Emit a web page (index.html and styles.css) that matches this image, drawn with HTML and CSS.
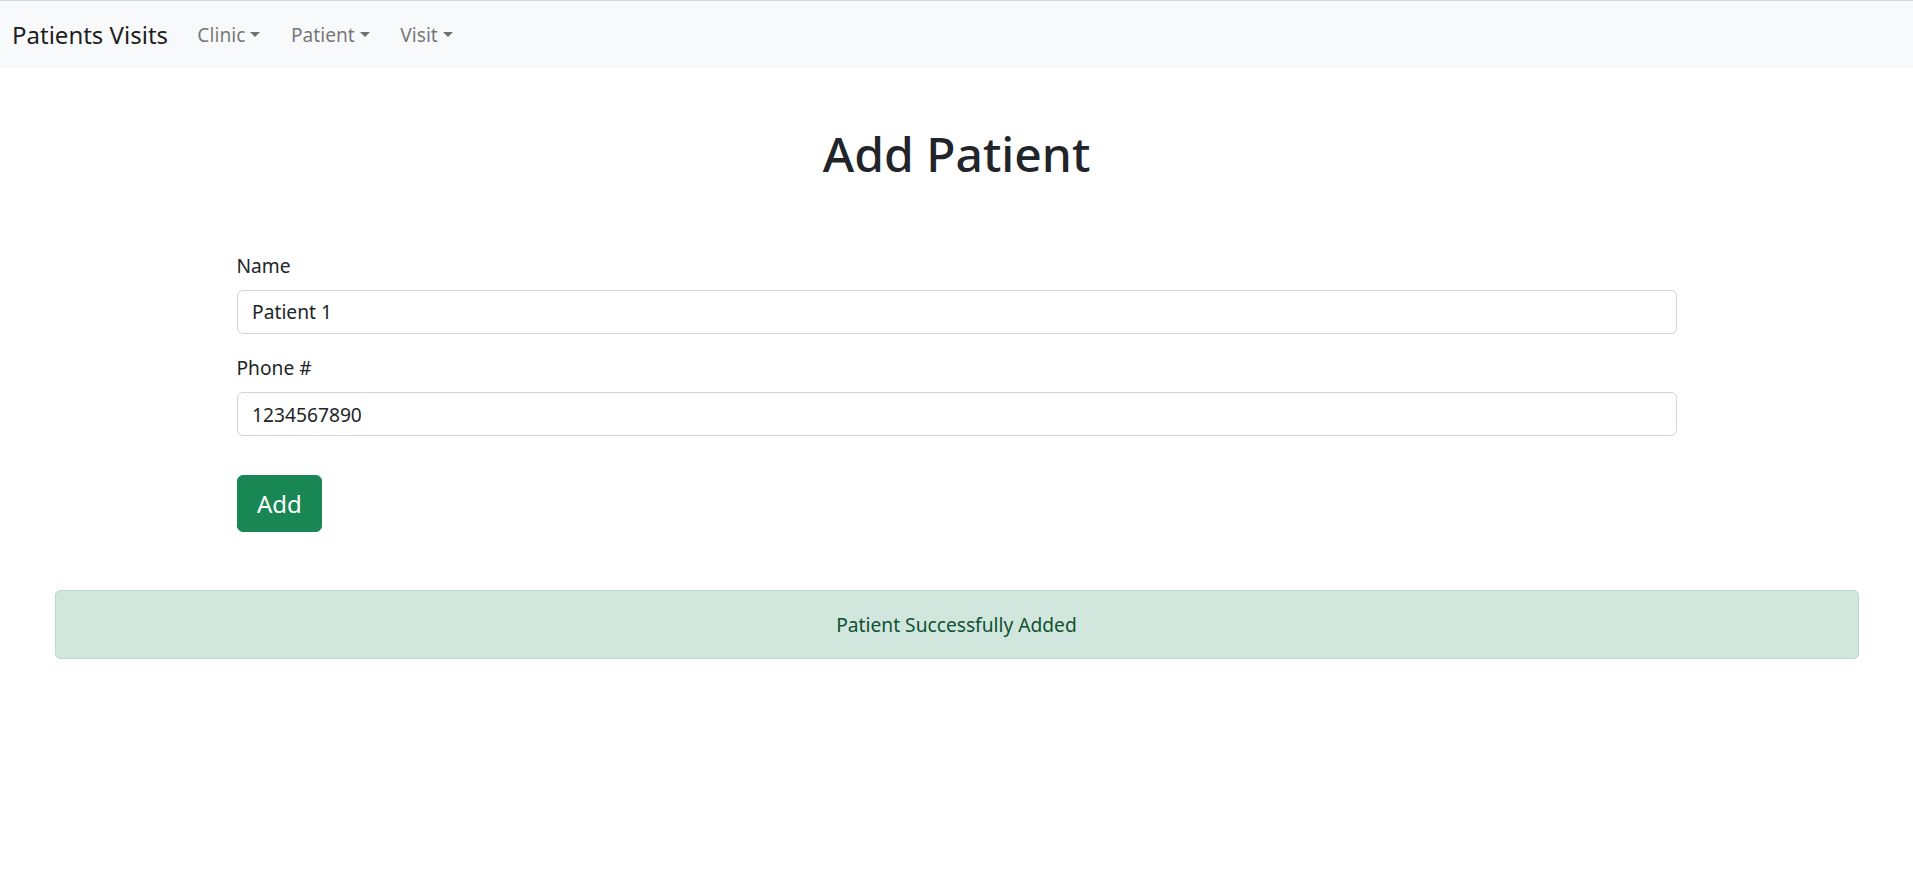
FILE: index.html
```html
<!DOCTYPE html>
<html lang="en">
<head>
<meta charset="utf-8">
<title>Patients Visits</title>
<link rel="stylesheet" href="styles.css">
</head>
<body>
<nav class="navbar">
  <a class="brand" href="#">Patients Visits</a>
  <ul class="nav">
    <li><a class="nav-link dropdown-toggle" href="#">Clinic</a></li>
    <li><a class="nav-link dropdown-toggle" href="#">Patient</a></li>
    <li><a class="nav-link dropdown-toggle" href="#">Visit</a></li>
  </ul>
</nav>
<main class="main">
  <h1 class="title">Add Patient</h1>
  <form class="form">
    <div class="field">
      <label class="label" for="name">Name</label>
      <input class="input" id="name" type="text" value="Patient 1">
    </div>
    <div class="field">
      <label class="label" for="phone">Phone #</label>
      <input class="input" id="phone" type="text" value="1234567890">
    </div>
    <button class="btn" type="button">Add</button>
  </form>
  <div class="alert">Patient Successfully Added</div>
</main>
</body>
</html>
```
FILE: styles.css
```css
* { box-sizing: border-box; }
html, body { margin: 0; padding: 0; }
body {
  font-family: "Noto Sans", "Open Sans", "Liberation Sans", sans-serif;
  font-size: 19.2px;
  line-height: 1.5;
  color: #212529;
  background: #fff;
}
.navbar {
  display: flex;
  align-items: center;
  height: 68px;
  padding: 0 12px;
  background: #f8f9fa;
  border-top: 1px solid #d4d5d6;
}
.brand {
  font-size: 24px;
  line-height: 36px;
  color: rgba(0,0,0,.9);
  text-decoration: none;
  margin-right: 14px;
}
.nav {
  display: flex;
  list-style: none;
  margin: 0;
  padding: 0;
}
.nav-link {
  display: block;
  padding: 0 15.3px;
  color: rgba(0,0,0,.55);
  text-decoration: none;
  line-height: 29px;
}
.dropdown-toggle::after {
  display: inline-block;
  margin-left: .255em;
  vertical-align: .255em;
  content: "";
  border-top: .3em solid;
  border-right: .3em solid transparent;
  border-left: .3em solid transparent;
  border-bottom: 0;
}
.main {
  padding-top: 56.6px;
}
.title {
  margin: 0;
  font-size: 48px;
  font-weight: 500;
  line-height: 1.2;
  text-align: center;
}
.form {
  width: 1440px;
  margin: 68.6px auto 0;
}
.field { margin-bottom: 19.5px; }
.label {
  display: block;
  margin-bottom: 9.8px;
  line-height: 29.3px;
}
.input {
  display: block;
  width: 100%;
  height: 44px;
  padding: 0 14.6px;
  font: inherit;
  color: #212529;
  border: 1px solid #d0d4d9;
  border-radius: 6px;
  background: #fff;
}
.btn {
  display: inline-block;
  margin-top: 19.5px;
  height: 57px;
  padding: 0 19.5px;
  font-family: inherit;
  font-size: 24px;
  line-height: 36px;
  color: #fff;
  background: #198754;
  border: 1px solid #198754;
  border-radius: 6px;
}
.alert {
  width: 1804px;
  margin: 58px auto 0;
  height: 69px;
  display: flex;
  align-items: center;
  justify-content: center;
  color: #0f5132;
  background: #d1e7dd;
  border: 1px solid #badbcc;
  border-radius: 5px;
}
```
